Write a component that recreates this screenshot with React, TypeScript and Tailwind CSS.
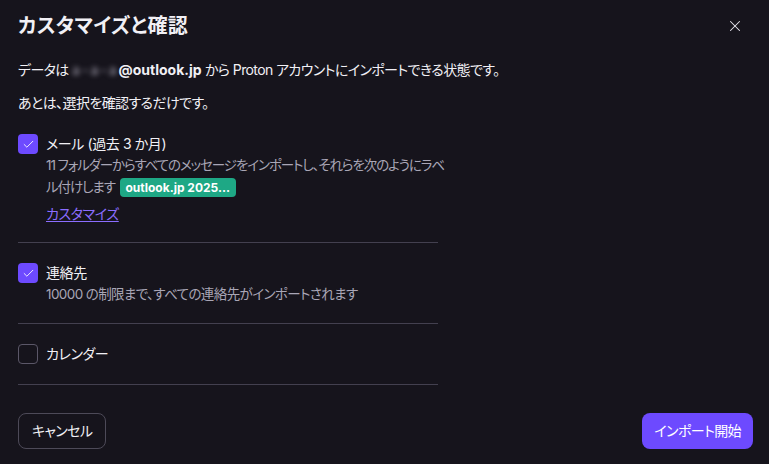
import { X, Check } from 'lucide-react';

const FONT = 'font-["Inter","Noto_Sans_CJK_JP",sans-serif] [font-feature-settings:"palt"]';

function Box({ checked }: { checked: boolean }) {
  return checked ? (
    <span className="flex h-5 w-5 shrink-0 items-center justify-center rounded-[4px] bg-[#6d4aff]">
      <Check size={13} strokeWidth={1.6} className="text-white" />
    </span>
  ) : (
    <span className="h-5 w-5 shrink-0 rounded-[4px] border border-[#5b5768]" />
  );
}

function Item({
  checked,
  label,
  children,
}: {
  checked: boolean;
  label: string;
  children?: React.ReactNode;
}) {
  return (
    <div className="flex gap-2">
      <Box checked={checked} />
      <div className="flex-1">
        <div className="text-sm leading-5 text-[#f1f0f5]">{label}</div>
        {children}
      </div>
    </div>
  );
}

export default function App() {
  return (
    <div className={`${FONT} h-[464px] w-[769px] bg-[#16141c] text-[#f1f0f5]`}>
      <div className="flex flex-col px-[18px] pt-[12px]">
        <div className="flex items-center justify-between">
          <h1 className="text-xl font-bold leading-7 tracking-[0.3px]">カスタマイズと確認</h1>
          <X size={18} strokeWidth={1.4} className="mr-[7px] text-[#e8e6ef]" />
        </div>

        <p className="mt-[20px] text-sm leading-5 tracking-[-0.6px]">
          データは{' '}
          <span className="inline-block tracking-[2px] blur-[2.5px] text-[#a09dab]">a-a-a</span>
          <span className="font-bold tracking-normal">@outlook.jp</span> から Proton アカウントにインポートできる状態です。
        </p>
        <p className="mt-[13px] text-sm leading-5 tracking-[-0.6px]">あとは、選択を確認するだけです。</p>

        <div className="mt-[21px] w-[420px] tracking-[-0.4px]">
          <Item checked label="メール (過去 3 か月)">
            <p className="whitespace-nowrap text-[13.5px] leading-[22px] tracking-[-1.1px] text-[#a9a6b6]">
              11 フォルダーからすべてのメッセージをインポートし、それらを次のようにラベ
              <br />
              ル付けします{' '}
              <span className="ml-0.5 inline-block rounded-[4px] bg-[#1ea885] px-[6px] text-xs font-bold leading-[19px] tracking-normal text-white">
                outlook.jp 2025...
              </span>
            </p>
            <a className="mt-[6px] inline-block text-sm leading-5 text-[#8b6dff] underline underline-offset-2">
              カスタマイズ
            </a>
          </Item>
          <div className="mt-[17px] border-t border-[#43404f]" />

          <div className="mt-[20px]">
            <Item checked label="連絡先">
              <p className="text-[13.5px] leading-[22px] tracking-[-0.6px] text-[#a9a6b6]">
                10000 の制限まで、すべての連絡先がインポートされます
              </p>
            </Item>
          </div>
          <div className="mt-[18px] border-t border-[#43404f]" />

          <div className="mt-[20px]">
            <Item checked={false} label="カレンダー" />
          </div>
          <div className="mt-[20px] border-t border-[#43404f]" />
        </div>

        <div className="mt-[28px] flex items-center justify-between tracking-[-0.6px]">
          <button className="h-9 rounded-lg border border-[#4d4a58] px-[13px] text-sm text-[#f1f0f5]">
            キャンセル
          </button>
          <button className="mr-[-2px] h-9 rounded-lg bg-[#6d4aff] px-[12px] text-sm text-white">
            インポート開始
          </button>
        </div>
      </div>
    </div>
  );
}
